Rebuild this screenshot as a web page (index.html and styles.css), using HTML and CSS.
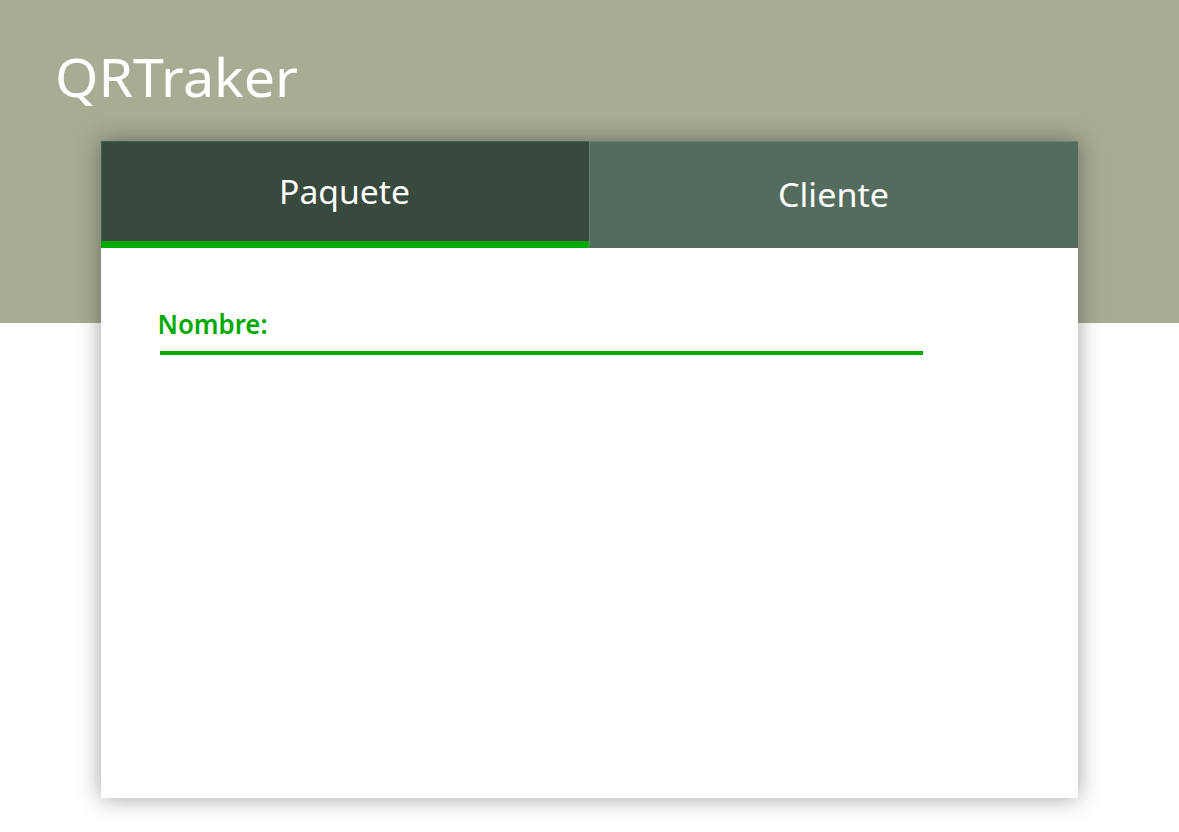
FILE: index.html
```html
<!DOCTYPE html>
<html lang="es">
<head>
<meta charset="utf-8">
<title>QRTraker</title>
<link rel="stylesheet" href="styles.css">
</head>
<body>
<div class="page">
<header><h1><svg class="brand" role="img" viewBox="0 0 242 60"><text x="-1" y="45" textLength="243" lengthAdjust="spacingAndGlyphs">QRTraker</text></svg></h1></header>
<main class="card">
<nav class="tabs">
<a class="tab active"><svg class="tab-label" viewBox="0 0 130 44"><text x="-1" y="31" textLength="131" lengthAdjust="spacingAndGlyphs">Paquete</text></svg></a>
<a class="tab"><svg class="tab-label client" viewBox="0 0 110 44"><text x="-1" y="31" textLength="111" lengthAdjust="spacingAndGlyphs">Cliente</text></svg></a>
</nav>
<section class="form">
<div class="field"><svg class="field-label" viewBox="0 0 110 36"><text x="-2.5" y="27" textLength="110" lengthAdjust="spacingAndGlyphs">Nombre:</text></svg></div>
</section>
</main>
</div>
</body>
</html>
```
FILE: styles.css
```css
* { box-sizing: border-box; }
body { margin: 0; font-family: "Noto Sans", sans-serif; }
.page { height: 832px; overflow: hidden; background: linear-gradient(#a8ac93 323px, #fff 323px); }
header { height: 141px; padding: 52px 0 0 56px; }
h1 { margin: 0; font-weight: 400; }
svg { display: block; overflow: visible; fill: #fff; }
.brand { width: 242px; height: 60px; font-size: 52.5px; }
.card { width: 977px; height: 657px; margin-left: 101px; background: #fff; box-shadow: 0 0 22px rgba(0, 0, 0, .38); }
.tabs { display: grid; grid-template-columns: 488px 489px; height: 107px; }
.tab { display: flex; justify-content: center; padding-top: 35px; background: #546c5e; border-bottom: 1px solid #5b635d; box-shadow: inset 1px 1px #687e71; }
.active { background: #38493e; border-bottom: 7px solid #0a0; padding-top: 32px; box-shadow: inset 1px 1px #4b5e52; }
.tab-label { width: 130px; height: 44px; font-size: 33px; }
.client { width: 110px; }
.form { padding: 59px 0 0 59px; }
.field { width: 763px; height: 48px; border-bottom: 4px solid #0a0; }
.field-label { width: 110px; height: 36px; font-size: 27px; font-weight: 600; fill: #0a0; }
```
